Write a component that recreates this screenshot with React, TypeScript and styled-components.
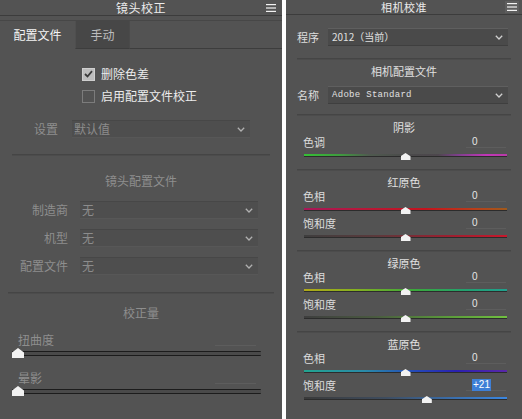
import React from 'react';
import styled, { createGlobalStyle } from 'styled-components';

const Global = createGlobalStyle`
  html, body { margin: 0; padding: 0; background: #ffffff; }
  body { font-family: "Noto Sans CJK SC", "Noto Sans", sans-serif; }
  * { box-sizing: border-box; }
`;

const Page = styled.div`
  display: flex;
  gap: 4px;
  width: 522px;
  height: 419px;
  background: #ffffff;
`;

const Panel = styled.div<{ $w: number }>`
  width: ${(p) => p.$w}px;
  height: 419px;
  background: #535353;
  display: flex;
  flex-direction: column;
  overflow: hidden;
  color: #d8d8d8;
  font-size: 12px;
  line-height: 1;
`;

const Header = styled.div<{ $h: number; $size: number }>`
  height: ${(p) => p.$h + 1}px;
  flex: none;
  display: grid;
  grid-template-columns: 1fr auto 1fr;
  align-items: center;
  border-bottom: 1px solid #3c3c3c;
  font-size: ${(p) => p.$size}px;
  color: #ececec;
`;

const HeaderTitle = styled.div<{ $lh: number }>`
  grid-column: 2;
  letter-spacing: 0.5px;
  line-height: ${(p) => p.$lh}px;
`;

const MenuBtn = styled.div<{ $box?: boolean }>`
  grid-column: 3;
  justify-self: end;
  margin-right: ${(p) => (p.$box ? 3 : 5)}px;
  width: ${(p) => (p.$box ? 14 : 12)}px;
  height: ${(p) => (p.$box ? 12 : 10)}px;
  display: flex;
  align-items: center;
  justify-content: center;
  background: ${(p) => (p.$box ? '#5e5e5e' : 'transparent')};
`;

const Menu = ({ box }: { box?: boolean }) => (
  <MenuBtn $box={box}>
    <svg width="10" height="8" viewBox="0 0 10 8">
      <rect x="0" y="0" width="10" height="1.2" fill="#f2f2f2" />
      <rect x="0" y="3.4" width="10" height="1.2" fill="#f2f2f2" />
      <rect x="0" y="6.8" width="10" height="1.2" fill="#f2f2f2" />
    </svg>
  </MenuBtn>
);

/* ---------- left panel ---------- */

const TabBar = styled.div`
  display: flex;
  height: 29px;
  margin-top: 4px;
  border-top: 1px solid #474747;
  flex: none;
`;

const Tab = styled.div<{ $active?: boolean; $w: number }>`
  width: ${(p) => p.$w}px;
  display: flex;
  align-items: center;
  justify-content: center;
  font-size: 12px;
  color: ${(p) => (p.$active ? '#f4f4f4' : '#bcbcbc')};
  background: ${(p) => (p.$active ? 'transparent' : '#474747')};
  border-bottom: ${(p) => (p.$active ? '1px solid transparent' : '1px solid #3d3d3d')};
  border-left: ${(p) => (p.$active ? 'none' : '1px solid #4f4f4f')};
`;

const TabFill = styled.div`
  flex: 1;
  border-bottom: 1px solid #3d3d3d;
  border-left: 1px solid #4a4a4a;
`;

const CheckList = styled.div`
  margin-top: 14px;
  padding-left: 82px;
  display: flex;
  flex-direction: column;
`;

const CheckRow = styled.div`
  height: 22px;
  display: flex;
  align-items: center;
  gap: 6px;
  color: #ececec;
  font-size: 12px;
`;

const Box = styled.div<{ $checked?: boolean }>`
  width: 13px;
  height: 13px;
  display: flex;
  align-items: center;
  justify-content: center;
  background: ${(p) => (p.$checked ? '#bdbdbd' : 'transparent')};
  border: 1px solid ${(p) => (p.$checked ? '#cfcfcf' : '#7c7c7c')};
`;

const Check = ({ checked, label }: { checked?: boolean; label: string }) => (
  <CheckRow>
    <Box $checked={checked}>
      {checked && (
        <svg width="9" height="8" viewBox="0 0 9 8">
          <path d="M1 4 L3.5 6.5 L8 1.2" stroke="#3a3a3a" strokeWidth="1.8" fill="none" />
        </svg>
      )}
    </Box>
    {label}
  </CheckRow>
);

const FieldRow = styled.div<{ $mt: number; $labelW: number; $gap: number; $pl?: number }>`
  margin-top: ${(p) => p.$mt}px;
  padding-left: ${(p) => p.$pl ?? 0}px;
  height: 18px;
  display: grid;
  grid-template-columns: ${(p) => p.$labelW}px auto;
  column-gap: ${(p) => p.$gap}px;
  align-items: center;
  flex: none;
`;

const FieldLabel = styled.div<{ $dim?: boolean; $align?: string; $size?: number }>`
  text-align: ${(p) => p.$align ?? 'right'};
  color: ${(p) => (p.$dim ? '#8e8e8e' : '#dedede')};
  font-size: ${(p) => p.$size ?? 12}px;
  white-space: nowrap;
`;

const Select = styled.div<{ $w: number; $dim?: boolean; $mono?: boolean }>`
  width: ${(p) => p.$w}px;
  height: 18px;
  display: flex;
  align-items: center;
  justify-content: space-between;
  padding: 0 5px 0 ${(p) => (p.$dim ? 2 : 4)}px;
  background: ${(p) => (p.$dim ? '#4e4e4e' : '#4a4a4a')};
  border-top: 1px solid ${(p) => (p.$dim ? '#474747' : '#5f5f5f')};
  border-bottom: 1px solid ${(p) => (p.$dim ? '#575757' : '#3f3f3f')};
  color: ${(p) => (p.$dim ? '#8c8c8c' : '#e0e0e0')};
  font-family: ${(p) => (p.$mono ? '"Liberation Mono", monospace' : '"Noto Sans CJK SC", sans-serif')};
  font-size: ${(p) => (p.$mono ? 9 : p.$dim ? 12 : 10)}px;
  letter-spacing: ${(p) => (p.$mono ? '0.3px' : '0')};
`;

const Chevron = ({ dim }: { dim?: boolean }) => (
  <svg width="8" height="5" viewBox="0 0 8 5">
    <path d="M0.8 0.8 L4 4 L7.2 0.8" stroke={dim ? '#b0b0b0' : '#d0d0d0'} strokeWidth="1.3" fill="none" />
  </svg>
);

const Divider = styled.div<{ $mt: number; $mx: number }>`
  margin: ${(p) => p.$mt}px ${(p) => p.$mx}px 0;
  height: 2px;
  flex: none;
  border-top: 1px solid #454545;
  border-bottom: 1px solid #4c4c4c;
`;

const SectionTitle = styled.div<{ $mt: number; $dim?: boolean; $size?: number }>`
  margin-top: ${(p) => p.$mt}px;
  height: 14px;
  display: flex;
  align-items: center;
  justify-content: center;
  color: ${(p) => (p.$dim ? '#8e8e8e' : '#e0e0e0')};
  font-size: ${(p) => p.$size ?? 12}px;
  flex: none;
`;

const SliderLabelRow = styled.div<{ $mt: number; $pl: number; $pr: number }>`
  margin-top: ${(p) => p.$mt}px;
  height: 14px;
  padding: 0 ${(p) => p.$pr}px 0 ${(p) => p.$pl}px;
  display: flex;
  align-items: center;
  justify-content: space-between;
  flex: none;
`;

const SliderLabel = styled.div<{ $dim?: boolean; $size: number }>`
  color: ${(p) => (p.$dim ? '#8e8e8e' : '#dcdcdc')};
  font-size: ${(p) => p.$size}px;
`;

const ValueField = styled.div<{ $w: number }>`
  width: ${(p) => p.$w}px;
  height: 12px;
  display: flex;
  align-items: center;
  padding-left: 6px;
  border-bottom: 1px solid #5d5d5d;
  color: #e6e6e6;
  font-family: "Liberation Sans", sans-serif;
  font-size: 10px;
`;

const Highlight = styled.span`
  background: #3d7fd6;
  color: #ffffff;
  padding: 0 1px;
  line-height: 12px;
`;

const TrackArea = styled.div<{ $h: number; $ml: number; $mr: number }>`
  height: ${(p) => p.$h}px;
  margin: 0 ${(p) => p.$mr}px 0 ${(p) => p.$ml}px;
  position: relative;
  display: flex;
  align-items: center;
  flex: none;
`;

const LeftTrack = styled.div`
  flex: 1;
  height: 5px;
  border-top: 1px solid #1c1c1c;
  border-bottom: 1px solid #1c1c1c;
  background: #4a4a4a;
  border-radius: 1px;
`;

const ColorTrack = styled.div<{ $bg: string }>`
  flex: 1;
  height: 3px;
  background: ${(p) => p.$bg};
  border-bottom: 1px solid #2c2c2c;
`;

const Thumb = styled.div<{ $w: number; $h: number; $top: number }>`
  position: absolute;
  top: ${(p) => p.$top}px;
  width: ${(p) => p.$w}px;
  height: ${(p) => p.$h}px;
  background: #f2f2f2;
  clip-path: polygon(50% 0, 100% 45%, 100% 100%, 0 100%, 0 45%);
  transform: translateX(-50%);
`;

const LeftSlider = ({ label, mt }: { label: string; mt: number }) => (
  <>
    <SliderLabelRow $mt={mt} $pl={18} $pr={26}>
      <SliderLabel $dim $size={12}>{label}</SliderLabel>
      <ValueField $w={41} />
    </SliderLabelRow>
    <TrackArea $h={12} $ml={12} $mr={21}>
      <LeftTrack />
      <Thumb $w={12} $h={10} $top={1} style={{ left: '6px' }} />
    </TrackArea>
  </>
);

/* ---------- right panel ---------- */

const RightSlider = ({
  label,
  value,
  bg,
  pos,
  mt,
  hl,
}: {
  label: string;
  value: string;
  bg: string;
  pos: number;
  mt: number;
  hl?: boolean;
}) => (
  <>
    <SliderLabelRow $mt={mt} $pl={17} $pr={16}>
      <SliderLabel $size={11}>{label}</SliderLabel>
      <ValueField $w={40}>{hl ? <Highlight>{value}</Highlight> : value}</ValueField>
    </SliderLabelRow>
    <TrackArea $h={12} $ml={18} $mr={15}>
      <ColorTrack $bg={bg} />
      <Thumb $w={10} $h={7} $top={4} style={{ left: `${pos}%` }} />
    </TrackArea>
  </>
);

const G = {
  shadowTint:
    'linear-gradient(to right, #35c035 0%, #3f9a3f 18%, #4f5a4f 32%, #4a4a4a 50%, #4d474d 66%, #7e3f8c 76%, #c236b8 90%, #b83aa8 100%)',
  redHue: 'linear-gradient(to right, #a8185a 0%, #b81838 30%, #c4141e 60%, #b8401a 85%, #a05a1c 100%)',
  redSat: 'linear-gradient(to right, #3e3e3e 0%, #5a3a3c 35%, #9a2030 70%, #c8182c 100%)',
  greenHue: 'linear-gradient(to right, #b0a818 0%, #86b020 25%, #3aa83c 55%, #22a070 80%, #20a08e 100%)',
  greenSat: 'linear-gradient(to right, #3e3e3e 0%, #4a5a40 35%, #5a9a3a 70%, #70c040 100%)',
  blueHue: 'linear-gradient(to right, #22a490 0%, #2a8aa8 30%, #2448b8 55%, #2a20b0 75%, #5a28a8 100%)',
  blueSat: 'linear-gradient(to right, #3a3a3a 0%, #3e4c5e 40%, #3a70b0 75%, #3a86e0 100%)',
};

export default function App() {
  return (
    <>
      <Global />
      <Page>
        <Panel $w={282}>
          <Header $h={15} $size={12}>
            <HeaderTitle $lh={15}>镜头校正</HeaderTitle>
            <Menu />
          </Header>
          <TabBar>
            <Tab $active $w={75}>配置文件</Tab>
            <Tab $w={54}>手动</Tab>
            <TabFill />
          </TabBar>
          <CheckList>
            <Check checked label="删除色差" />
            <Check label="启用配置文件校正" />
          </CheckList>
          <FieldRow $mt={13} $labelW={58} $gap={14}>
            <FieldLabel $dim>设置</FieldLabel>
            <Select $w={178} $dim>
              默认值
              <Chevron dim />
            </Select>
          </FieldRow>
          <Divider $mt={16} $mx={12} />
          <SectionTitle $mt={18} $dim>镜头配置文件</SectionTitle>
          <FieldRow $mt={13} $labelW={68} $gap={12}>
            <FieldLabel $dim>制造商</FieldLabel>
            <Select $w={178} $dim>
              无
              <Chevron dim />
            </Select>
          </FieldRow>
          <FieldRow $mt={10} $labelW={68} $gap={12}>
            <FieldLabel $dim>机型</FieldLabel>
            <Select $w={178} $dim>
              无
              <Chevron dim />
            </Select>
          </FieldRow>
          <FieldRow $mt={10} $labelW={68} $gap={12}>
            <FieldLabel $dim>配置文件</FieldLabel>
            <Select $w={178} $dim>
              无
              <Chevron dim />
            </Select>
          </FieldRow>
          <Divider $mt={17} $mx={8} />
          <SectionTitle $mt={12} $dim>校正量</SectionTitle>
          <LeftSlider label="扭曲度" mt={13} />
          <LeftSlider label="晕影" mt={12} />
        </Panel>

        <Panel $w={236}>
          <Header $h={14} $size={11}>
            <HeaderTitle $lh={14}>相机校准</HeaderTitle>
            <Menu box />
          </Header>
          <FieldRow $mt={13} $labelW={26} $gap={5} $pl={11}>
            <FieldLabel $align="left" $size={11}>程序</FieldLabel>
            <Select $w={180}>
              2012（当前）
              <Chevron />
            </Select>
          </FieldRow>
          <Divider $mt={12} $mx={11} />
          <SectionTitle $mt={4} $size={11}>相机配置文件</SectionTitle>
          <FieldRow $mt={8} $labelW={26} $gap={5} $pl={11}>
            <FieldLabel $align="left" $size={11}>名称</FieldLabel>
            <Select $w={180} $mono>
              Adobe Standard
              <Chevron />
            </Select>
          </FieldRow>
          <Divider $mt={10} $mx={11} />
          <SectionTitle $mt={4} $size={11}>阴影</SectionTitle>
          <RightSlider label="色调" value="0" bg={G.shadowTint} pos={50} mt={1} />
          <Divider $mt={8} $mx={11} />
          <SectionTitle $mt={4} $size={11}>红原色</SectionTitle>
          <RightSlider label="色相" value="0" bg={G.redHue} pos={50} mt={0} />
          <RightSlider label="饱和度" value="0" bg={G.redSat} pos={50} mt={1} />
          <Divider $mt={8} $mx={11} />
          <SectionTitle $mt={4} $size={11}>绿原色</SectionTitle>
          <RightSlider label="色相" value="0" bg={G.greenHue} pos={50} mt={0} />
          <RightSlider label="饱和度" value="0" bg={G.greenSat} pos={50} mt={1} />
          <Divider $mt={8} $mx={11} />
          <SectionTitle $mt={4} $size={11}>蓝原色</SectionTitle>
          <RightSlider label="色相" value="0" bg={G.blueHue} pos={50} mt={0} />
          <RightSlider label="饱和度" value="+21" bg={G.blueSat} pos={60.5} mt={1} hl />
        </Panel>
      </Page>
    </>
  );
}
